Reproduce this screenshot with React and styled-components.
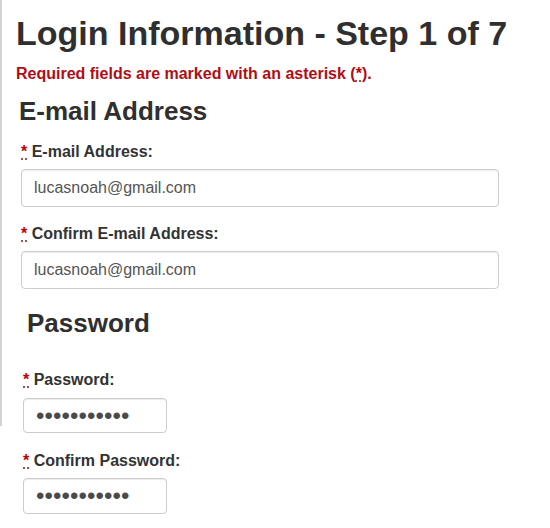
import React from "react";
import styled, { createGlobalStyle } from "styled-components";

const GlobalStyle = createGlobalStyle`
  html, body {
    margin: 0;
    padding: 0;
    background: #ffffff;
  }
  body {
    font-family: "Liberation Sans", Arial, sans-serif;
    color: #333333;
  }
`;

const Page = styled.div`
  width: 550px;
  min-height: 528px;
  box-sizing: border-box;
  padding: 13px 0 0 16px;
  background-image: linear-gradient(#d2d2d2, #d2d2d2);
  background-repeat: no-repeat;
  background-size: 2px 426px;
  background-position: 0 0;
`;

const Title = styled.h1`
  margin: 0;
  font-size: 34px;
  line-height: 40px;
  font-weight: 700;
  color: #2f2f2f;
`;

const Notice = styled.p`
  margin: 11px 0 0 0;
  font-size: 16px;
  line-height: 20px;
  font-weight: 700;
  color: #b00d14;
`;

const Section = styled.section`
  margin-top: ${(p) => p.$top}px;
`;

const SectionTitle = styled.h2`
  margin: 0 0 0 ${(p) => p.$indent}px;
  font-size: 26px;
  line-height: 30px;
  font-weight: 700;
  color: #2f2f2f;
`;

const Fields = styled.div`
  padding-left: ${(p) => p.$indent}px;
  margin-top: ${(p) => p.$top}px;
  display: flex;
  flex-direction: column;
  gap: ${(p) => p.$gap}px;
`;

const Field = styled.div`
  display: flex;
  flex-direction: column;
  gap: ${(p) => p.$gap}px;
`;

const Label = styled.label`
  font-size: 16px;
  line-height: 20px;
  font-weight: 700;
  color: #333333;
`;

const Req = styled.abbr`
  color: #c00000;
  text-decoration: underline dotted #8a2a2a;
  text-underline-offset: 2px;
  cursor: help;
`;

const Input = styled.input`
  box-sizing: border-box;
  width: ${(p) => p.$w}px;
  height: ${(p) => p.$h}px;
  padding: 0 12px;
  margin: 0;
  border: 1px solid #cccccc;
  border-radius: 4px;
  box-shadow: inset 0 1px 1px rgba(0, 0, 0, 0.075);
  background: #ffffff;
  font-family: "Liberation Sans", Arial, sans-serif;
  font-size: 16px;
  color: #555555;
  outline: none;

  &[type="password"] {
    font-size: 24px;
    letter-spacing: 0.1px;
    color: #4a4a4a;
  }
`;

function FormField({ label, value, type = "text", w, h, gap }) {
  return (
    <Field $gap={gap}>
      <Label>
        <Req title="required">*</Req> {label}
      </Label>
      <Input type={type} defaultValue={value} $w={w} $h={h} readOnly />
    </Field>
  );
}

export default function App() {
  return (
    <>
      <GlobalStyle />
      <Page>
        <Title>Login Information - Step 1 of 7</Title>
        <Notice>
          Required fields are marked with an asterisk (<Req title="required">*</Req>).
        </Notice>

        <Section $top={12}>
          <SectionTitle $indent={3}>E-mail Address</SectionTitle>
          <Fields $indent={5} $top={16} $gap={17}>
            <FormField label="E-mail Address:" value="lucasnoah@gmail.com" w={478} h={38} gap={7} />
            <FormField label="Confirm E-mail Address:" value="lucasnoah@gmail.com" w={478} h={38} gap={7} />
          </Fields>
        </Section>

        <Section $top={19}>
          <SectionTitle $indent={11}>Password</SectionTitle>
          <Fields $indent={7} $top={32} $gap={18}>
            <FormField label="Password:" value="aaaaaaaaaaa" type="password" w={144} h={35} gap={8} />
            <FormField label="Confirm Password:" value="aaaaaaaaaaa" type="password" w={144} h={36} gap={7} />
          </Fields>
        </Section>
      </Page>
    </>
  );
}
